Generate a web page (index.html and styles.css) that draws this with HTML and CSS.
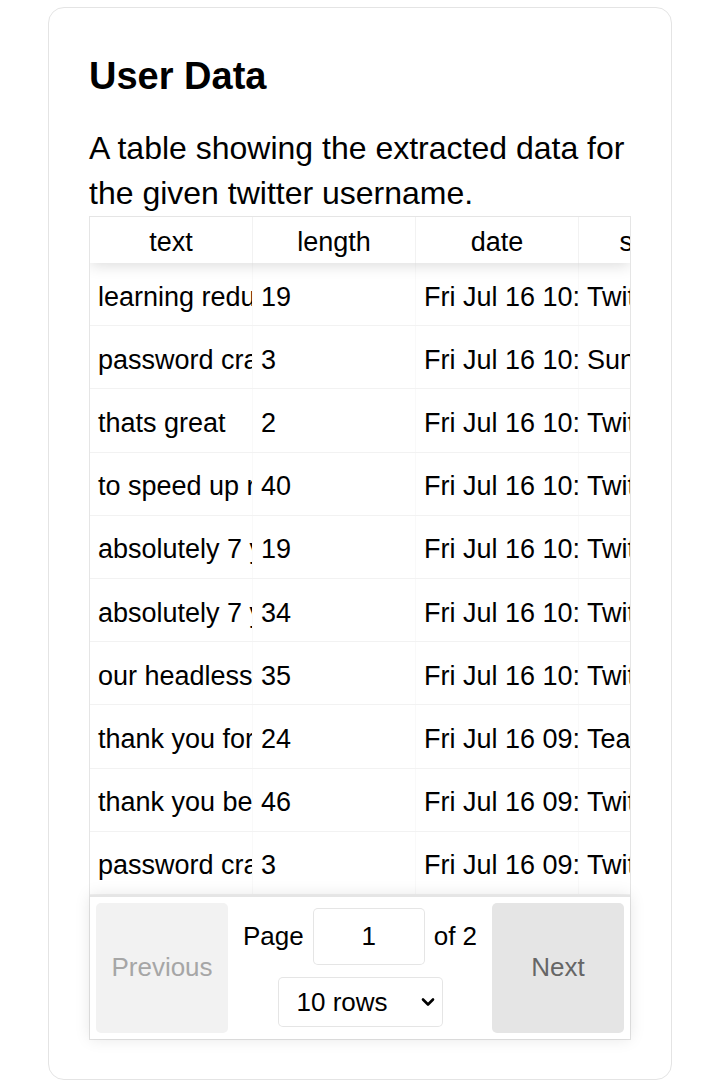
FILE: index.html
```html
<!DOCTYPE html>
<html lang="en">
<head>
<meta charset="utf-8">
<title>User Data</title>
<link rel="stylesheet" href="styles.css">
</head>
<body>
<div class="card">
  <h2 class="title">User Data</h2>
  <p class="desc">A table showing the extracted data for the given twitter username.</p>
  <div class="rtable">
    <div class="rt-table">
      <div class="thead">
        <div class="tr">
          <div class="th">text</div>
          <div class="th">length</div>
          <div class="th">date</div>
          <div class="th">source</div>
        </div>
      </div>
      <div class="tbody">
        <div class="tr row"><div class="td">learning reduces the time</div><div class="td">19</div><div class="td">Fri Jul 16 10:42:11 +0000 2021</div><div class="td">Twitter Web App</div></div>
        <div class="tr row"><div class="td">password cracking</div><div class="td">3</div><div class="td">Fri Jul 16 10:31:05 +0000 2021</div><div class="td">Sunday Tweets</div></div>
        <div class="tr row"><div class="td">thats great</div><div class="td">2</div><div class="td">Fri Jul 16 10:17:40 +0000 2021</div><div class="td">Twitter Web App</div></div>
        <div class="tr row"><div class="td">to speed up recon</div><div class="td">40</div><div class="td">Fri Jul 16 10:09:22 +0000 2021</div><div class="td">Twitter Web App</div></div>
        <div class="tr row"><div class="td">absolutely 7 years</div><div class="td">19</div><div class="td">Fri Jul 16 10:06:51 +0000 2021</div><div class="td">Twitter Web App</div></div>
        <div class="tr row"><div class="td">absolutely 7 years</div><div class="td">34</div><div class="td">Fri Jul 16 10:04:18 +0000 2021</div><div class="td">Twitter Web App</div></div>
        <div class="tr row"><div class="td">our headless browser</div><div class="td">35</div><div class="td">Fri Jul 16 10:01:37 +0000 2021</div><div class="td">Twitter Web App</div></div>
        <div class="tr row"><div class="td">thank you for sharing</div><div class="td">24</div><div class="td">Fri Jul 16 09:58:02 +0000 2021</div><div class="td">TeamBot</div></div>
        <div class="tr row"><div class="td">thank you be safe</div><div class="td">46</div><div class="td">Fri Jul 16 09:51:44 +0000 2021</div><div class="td">Twitter Web App</div></div>
        <div class="tr row"><div class="td">password cracking</div><div class="td">3</div><div class="td">Fri Jul 16 09:47:29 +0000 2021</div><div class="td">Twitter Web App</div></div>
      </div>
    </div>
    <div class="pagination">
      <div class="pg-side"><button class="btn" disabled>Previous</button></div>
      <div class="pg-center">
        <div class="page-info">Page <input class="page-jump" type="text" value="1"> of 2</div>
        <div class="size-wrap">
          <select class="size-select"><option>10 rows</option><option>20 rows</option></select>
          <svg class="chev" viewBox="0 0 14 10" aria-hidden="true"><path d="M2 2.5 L7 7.5 L12 2.5" fill="none" stroke="#000" stroke-width="2.6" stroke-linecap="round" stroke-linejoin="round"/></svg>
        </div>
      </div>
      <div class="pg-side"><button class="btn">Next</button></div>
    </div>
  </div>
</div>
</body>
</html>
```

FILE: styles.css
```css
body {
  margin: 0;
  background: #fff;
  color: #000;
  font-family: "Liberation Sans", Arial, sans-serif;
}

.card {
  box-sizing: border-box;
  width: 624px;
  margin: 7px 0 0 48px;
  border: 1px solid #e4e4e4;
  border-radius: 16px;
  padding: 40px 40px 39px;
}

.title {
  margin: 0;
  font-size: 38px;
  line-height: 56px;
  font-weight: 700;
}

.desc {
  margin: 22px 0 0;
  font-size: 32px;
  line-height: 45px;
}

.rtable {
  position: relative;
  display: flex;
  flex-direction: column;
  border: 1px solid rgba(0, 0, 0, 0.1);
  font-size: 27px;
}

.rt-table {
  display: flex;
  flex-direction: column;
  overflow: hidden;
}

.thead {
  position: relative;
  z-index: 1;
  box-shadow: 0 2px 15px 0 rgba(0, 0, 0, 0.15);
}

.tr {
  display: flex;
}

.th,
.td {
  flex: 0 0 163px;
  box-sizing: border-box;
  white-space: nowrap;
  overflow: hidden;
}

.th {
  height: 46px;
  padding-top: 5px;
  display: flex;
  align-items: center;
  justify-content: center;
  border-right: 1px solid rgba(0, 0, 0, 0.05);
}

.row {
  box-sizing: border-box;
  height: 63.2px;
  border-bottom: 1px solid rgba(0, 0, 0, 0.05);
}

.td {
  display: flex;
  align-items: center;
  padding: 6px 8px 0;
  border-right: 1px solid rgba(0, 0, 0, 0.025);
}

.pagination {
  position: relative;
  z-index: 1;
  display: flex;
  padding: 6px;
  border-top: 2px solid rgba(0, 0, 0, 0.1);
  box-shadow: 0 0 15px 0 rgba(0, 0, 0, 0.1);
  font-size: 26px;
}

.pg-side {
  flex: 1;
  display: flex;
}

.btn {
  flex: 1;
  height: 130px;
  border: 0;
  border-radius: 5px;
  background: #e5e5e5;
  color: #666;
  font-family: inherit;
  font-size: 26px;
  padding: 0;
}

.btn:disabled {
  background: #f2f2f2;
  color: #a6a6a6;
}

.pg-center {
  flex: 2;
  display: flex;
  flex-direction: column;
  align-items: center;
  justify-content: center;
  gap: 12px;
}

.page-info {
  display: flex;
  align-items: center;
}

.page-jump {
  box-sizing: border-box;
  width: 112px;
  height: 57px;
  margin: 0 9px;
  padding: 0;
  border: 1px solid rgba(0, 0, 0, 0.1);
  border-radius: 5px;
  background: #fff;
  color: #000;
  font-family: inherit;
  font-size: 26px;
  text-align: center;
}

.size-wrap {
  position: relative;
}

.size-select {
  display: block;
  box-sizing: border-box;
  width: 165px;
  height: 50px;
  padding: 0 0 0 18px;
  border: 1px solid rgba(0, 0, 0, 0.1);
  border-radius: 5px;
  background: #fff;
  color: #000;
  font-family: inherit;
  font-size: 26px;
  appearance: none;
  -webkit-appearance: none;
}

.chev {
  position: absolute;
  right: 8px;
  top: 50%;
  width: 14px;
  height: 10px;
  margin-top: -5px;
  pointer-events: none;
}
```
